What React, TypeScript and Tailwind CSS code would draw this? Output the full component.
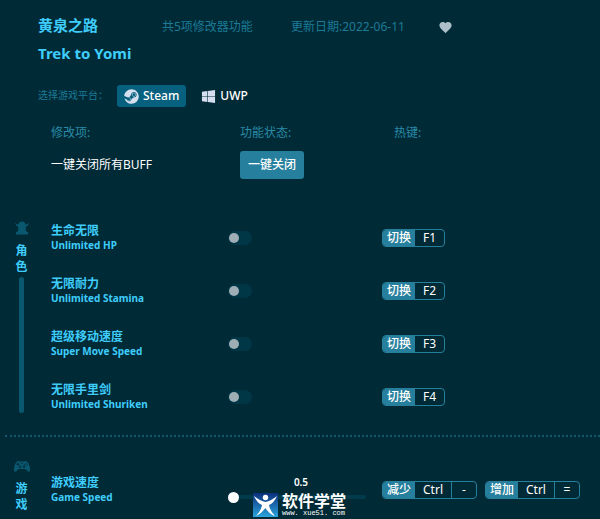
import { useState, type ReactNode } from "react"
import { FaSteam, FaWindows } from "react-icons/fa"
import { IoMdHeart } from "react-icons/io"

const platforms = [
  { id: "steam", name: "Steam", icon: FaSteam },
  { id: "uwp", name: "UWP", icon: FaWindows },
]

const cheats = [
  { name: "生命无限", english: "Unlimited HP", hotkey: "F1" },
  { name: "无限耐力", english: "Unlimited Stamina", hotkey: "F2" },
  { name: "超级移动速度", english: "Super Move Speed", hotkey: "F3" },
  { name: "无限手里剑", english: "Unlimited Shuriken", hotkey: "F4" },
]

export default function App() {
  const [platform, setPlatform] = useState("steam")

  return (
    <main className="min-h-screen w-full overflow-hidden bg-[#002a36] pt-[11px] font-['Noto_Sans','Noto_Sans_CJK_SC',sans-serif] text-xs text-white">
      <header className="grid grid-cols-[124fr_129fr_147fr_162fr] pl-[38px]">
        <h1 className="row-span-2 text-[15px] leading-7 font-bold whitespace-nowrap text-[#3fcdfb]">
          <span className="block">黄泉之路</span>
          <span className="block">Trek to Yomi</span>
        </h1>
        <p className="leading-8 whitespace-nowrap text-[#1c7a96]">共5项修改器功能</p>
        <p className="leading-8 whitespace-nowrap text-[#1c7a96]">更新日期:2022-06-11</p>
        <button type="button" aria-label="收藏" className="flex h-8 items-center text-[#aebfc9]">
          <IoMdHeart className="size-[15px]" />
        </button>
      </header>

      <div className="mt-[18px] flex items-center pl-[38px]">
        <span className="w-[79px] text-[10px] whitespace-nowrap text-[#1c7a96]">选择游戏平台：</span>
        <div className="flex gap-2">
          {platforms.map(({ id, name, icon: Icon }) => (
            <button
              key={id}
              type="button"
              aria-pressed={platform === id}
              onClick={() => setPlatform(id)}
              className="flex h-[22px] items-center gap-1 rounded-[3px] px-[7px] font-medium aria-pressed:bg-[#07607d]"
            >
              <Icon className="size-[15px] text-[#d5dff0]" />
              {name}
            </button>
          ))}
        </div>
      </div>

      <div className="mt-[18px] grid grid-cols-[177fr_154fr_218fr] items-center gap-y-2.5 pl-[51px]">
        <span className="leading-4 text-[#2a8aa7]">修改项:</span>
        <span className="pl-3 leading-4 text-[#2a8aa7]">功能状态:</span>
        <span className="pl-3 leading-4 text-[#2a8aa7]">热键:</span>
        <span>一键关闭所有BUFF</span>
        <div className="pl-3">
          <button type="button" className="h-7 rounded-[3px] bg-[#267f9c] px-2 font-medium">
            一键关闭
          </button>
        </div>
      </div>

      <section className="mt-8 flex">
        <Category label="角色">
          <HelmetIcon />
        </Category>
        <div className="flex-1">
          {cheats.map((cheat) => (
            <CheatRow key={cheat.hotkey} cheat={cheat} />
          ))}
        </div>
      </section>

      <hr className="mt-3 ml-[5px] border-t-2 border-dotted border-[#14566b]" />

      <section className="mt-3 flex">
        <Category label="游戏" bar={false}>
          <GamepadIcon />
        </Category>
        <SpeedRow />
      </section>
    </main>
  )
}

function Category({ label, bar = true, children }: { label: string; bar?: boolean; children: ReactNode }) {
  return (
    <div className="flex w-[43px] flex-col items-center pt-2 pb-2.5 text-[#0a5770]">
      <span className="flex h-[18px] items-center">{children}</span>
      <h2 className="mt-1.5 w-3 leading-4 font-semibold text-[#3fcdfb]">{label}</h2>
      {bar && <div className="mt-0.5 w-[5px] flex-1 rounded-full bg-[#0a5770]" />}
    </div>
  )
}

function CheatName({ id, name, english }: { id: string; name: string; english: string }) {
  return (
    <label htmlFor={id} className="font-bold whitespace-nowrap text-[#3fcdfb]">
      <span className="block leading-[15px]">{name}</span>
      <span className="block text-[10px] leading-[14px]">{english}</span>
    </label>
  )
}

function CheatRow({ cheat }: { cheat: (typeof cheats)[0] }) {
  return (
    <div className="grid h-[53px] grid-cols-[177fr_154fr_218fr] items-center pl-2">
      <CheatName id={cheat.hotkey} name={cheat.name} english={cheat.english} />
      <input
        id={cheat.hotkey}
        type="checkbox"
        className="h-[14px] w-6 appearance-none rounded-full bg-[#003747] px-px py-0.5 before:block before:size-2.5 before:rounded-full before:bg-[#9fadb5] checked:bg-[#267f9c] checked:before:ml-auto"
      />
      <Hotkey action="切换" keys={[cheat.hotkey]} />
    </div>
  )
}

function SpeedRow() {
  return (
    <div className="mt-[14px] grid h-[53px] flex-1 grid-cols-[177fr_154fr_218fr] items-center pl-2">
      <CheatName id="speed" name="游戏速度" english="Game Speed" />
      <div className="relative mr-4 pb-1">
        <output htmlFor="speed" className="block pl-2 text-center text-[10px] leading-3 font-semibold">
          0.5
        </output>
        <input
          id="speed"
          type="range"
          min="0.5"
          max="10"
          step="0.5"
          defaultValue="0.5"
          className="mt-[7px] block h-1 w-full appearance-none rounded-full bg-[#003b4b] [&::-webkit-slider-thumb]:size-[11px] [&::-webkit-slider-thumb]:appearance-none [&::-webkit-slider-thumb]:rounded-full [&::-webkit-slider-thumb]:bg-white"
        />
        <Watermark />
      </div>
      <div className="flex gap-2">
        <Hotkey action="减少" keys={["Ctrl", "-"]} />
        <Hotkey action="增加" keys={["Ctrl", "="]} />
      </div>
    </div>
  )
}

function Hotkey({ action, keys }: { action: string; keys: string[] }) {
  return (
    <div className="flex h-[18px] w-fit overflow-hidden rounded-[4px] border border-[#267f9c] leading-4 whitespace-nowrap">
      <span className="bg-[#267f9c] px-1 font-medium">{action}</span>
      {keys.map((key) => (
        <kbd key={key} className="min-w-6 border-[#267f9c] px-2 text-center font-[inherit] not-last:border-r">
          {key}
        </kbd>
      ))}
    </div>
  )
}

function Watermark() {
  return (
    <div className="pointer-events-none absolute top-[17px] left-[25px] flex items-center gap-1">
      <svg viewBox="0 0 25 24" className="h-6 w-[25px]" aria-hidden="true">
        <defs>
          <linearGradient id="sky" x1="0" y1="0" x2="0" y2="1">
            <stop offset="0" stopColor="#0b2f7c" />
            <stop offset="1" stopColor="#2aa4dc" />
          </linearGradient>
        </defs>
        <rect width="25" height="24" fill="url(#sky)" />
        <circle cx="12.5" cy="4.5" r="2.7" fill="#fff" />
        <path d="M1 3 Q7 8 12.5 9 Q18 8 24 3 Q21 10 16 12 Q17 18 22 23 Q15 20 12.5 15 Q9 20 3 23 Q8 18 9 12 Q4 10 1 3Z" fill="#fff" />
      </svg>
      <div className="whitespace-nowrap">
        <p className="text-base leading-4 font-semibold">软件学堂</p>
        <p className="font-['Liberation_Mono',monospace] text-[7px] leading-2">www. xue51. com</p>
      </div>
    </div>
  )
}

function HelmetIcon() {
  return (
    <svg viewBox="0 0 14 14" className="size-[14px]" fill="currentColor" aria-hidden="true">
      <path d="M0.3 1 Q1 3.6 3.3 3.6 Q4.2 0.6 7 0.6 Q9.8 0.6 10.7 3.6 Q13 3.6 13.7 1 Q13.8 5.2 10.8 5.6 V9.6 Q11.2 11 13 11.2 V13.4 H1 V11.2 Q2.800 11 3.2 9.6 V5.6 Q0.2 5.2 0.3 1Z" />
    </svg>
  )
}

function GamepadIcon() {
  return (
    <svg viewBox="0 0 18 13" className="h-[13px] w-[18px]" aria-hidden="true">
      <path
        d="M4.500 1.200 Q6 0.600 7 1.500 H11 Q12 0.600 13.500 1.200 Q15.500 2 16.500 6 Q17.800 10.500 16.300 11.700 Q15 12.300 13.200 9.800 Q12.600 9 11.500 9 H6.500 Q5.400 9 4.800 9.800 Q3 12.300 1.700 11.700 Q0.200 10.500 1.500 6 Q2.500 2 4.500 1.200Z"
        fill="currentColor"
      />
      <g fill="#00303e">
        <circle cx="5" cy="4.200" r="1.300" />
        <circle cx="11" cy="6.800" r="1.200" />
        <path d="M6.600 5.500h1v.9h.9v1h-.9v.9h-1v-.9h-.9v-1h.9z" />
        <circle cx="13" cy="3" r=".6" />
        <circle cx="14.300" cy="4.300" r=".6" />
        <circle cx="13" cy="5.600" r=".6" />
        <circle cx="11.700" cy="4.300" r=".6" />
        <circle cx="9" cy="3.200" r=".8" />
      </g>
    </svg>
  )
}
